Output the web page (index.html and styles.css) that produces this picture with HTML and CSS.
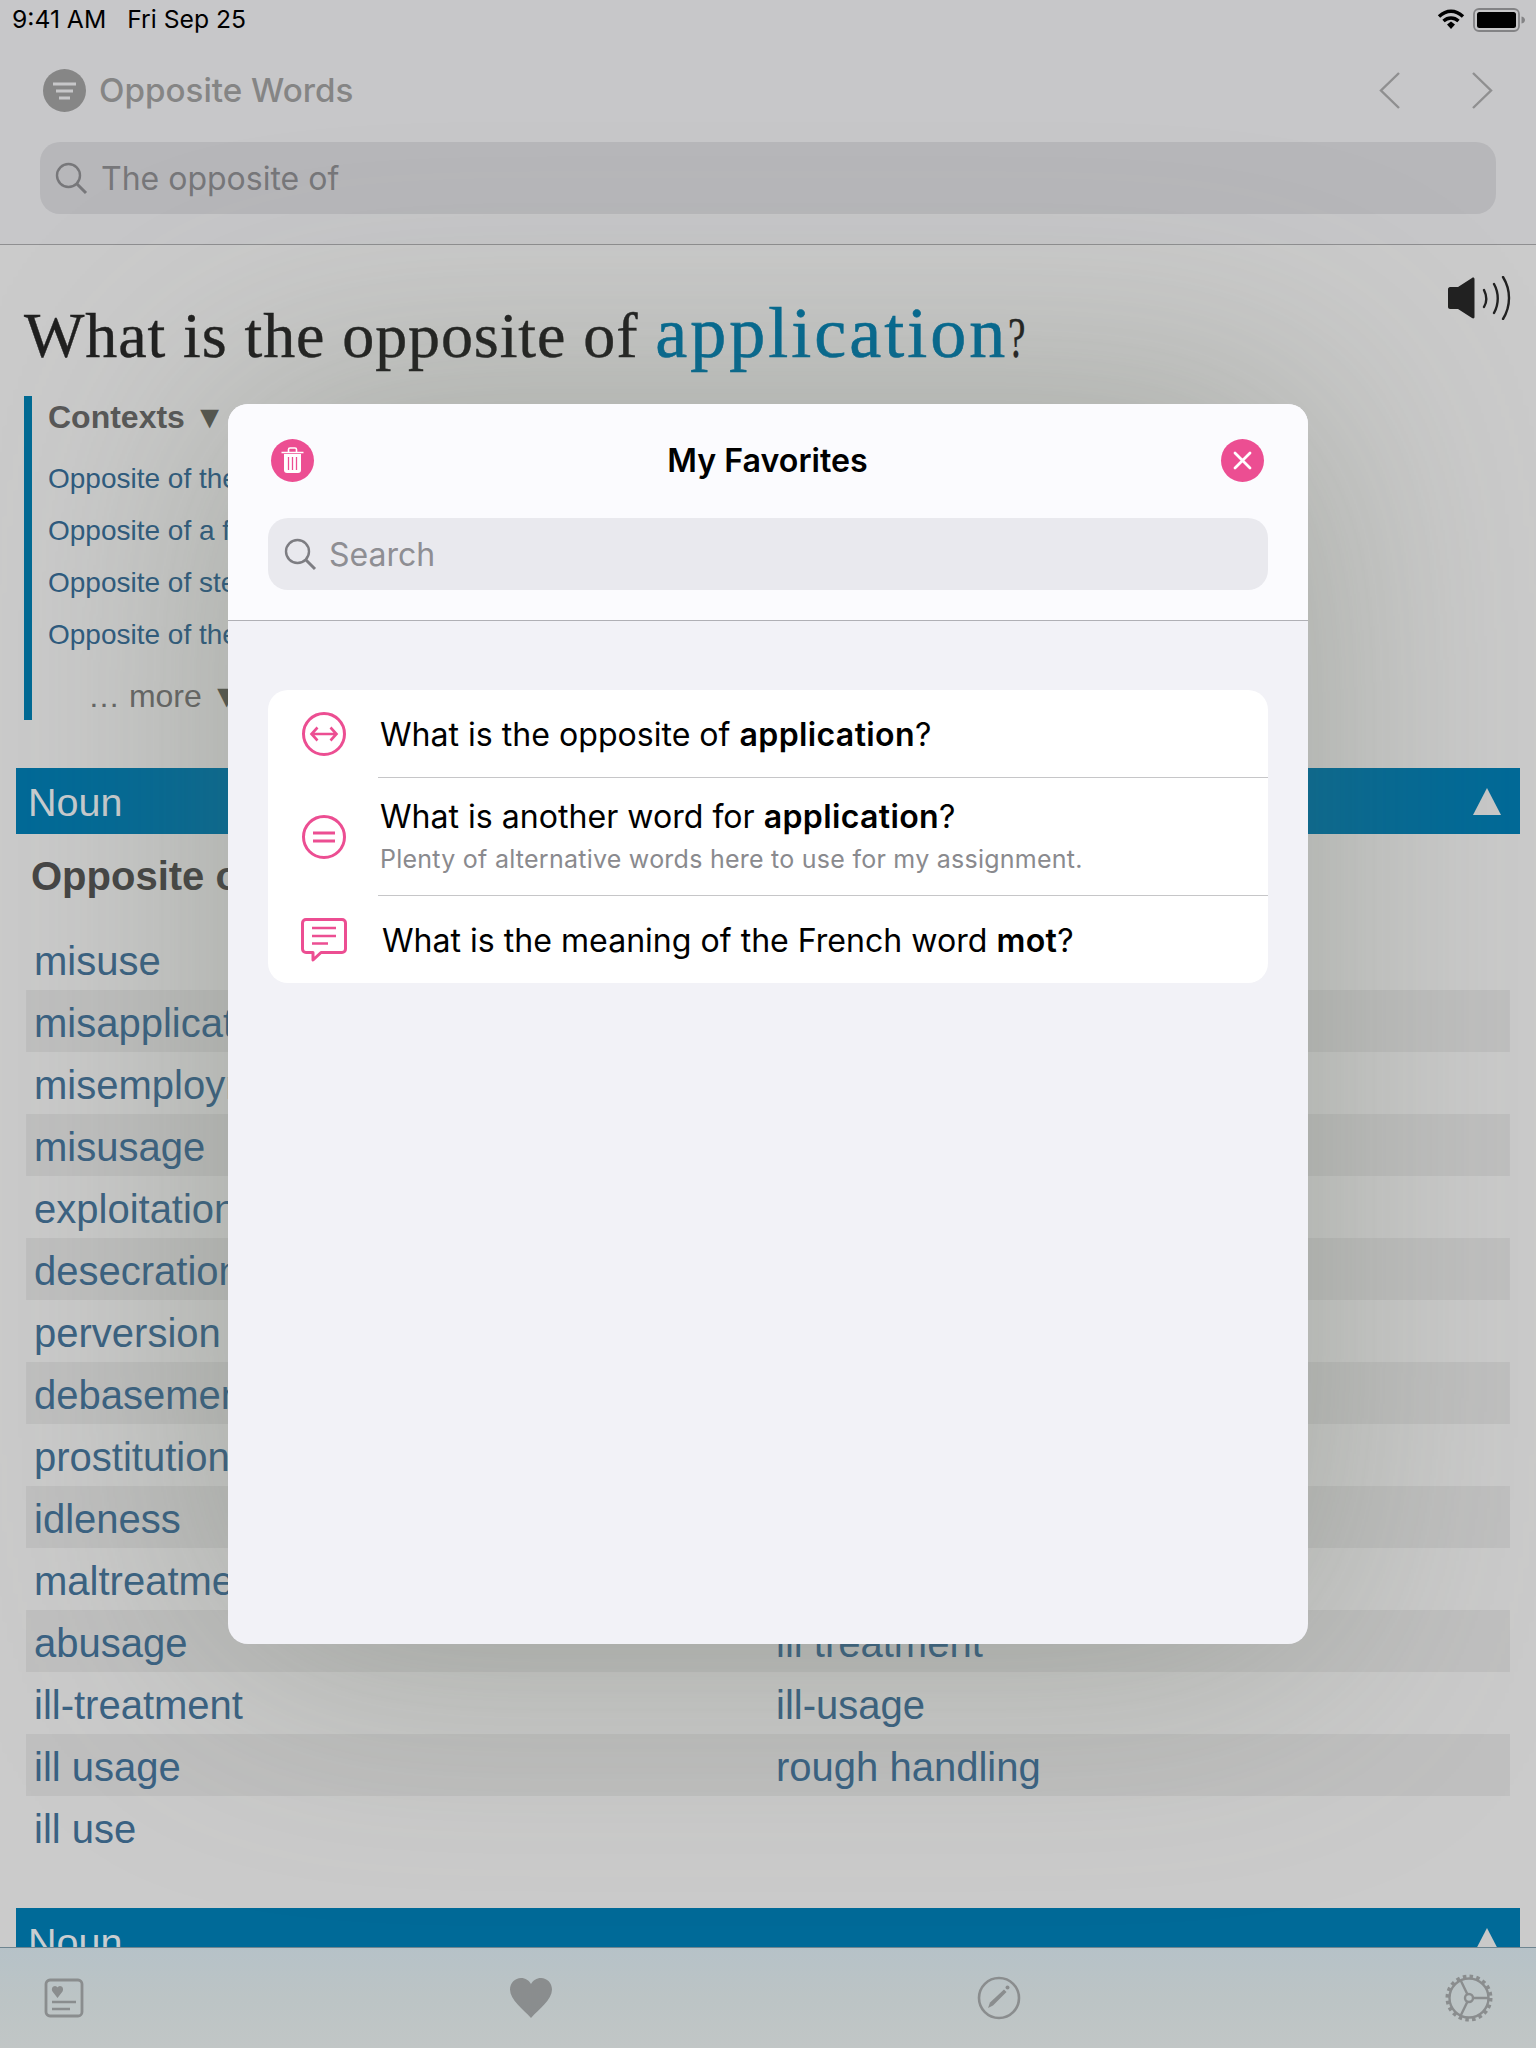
FILE: index.html
```html
<!DOCTYPE html>
<html lang="en">
<head>
  <meta charset="UTF-8">
  <title>Opposite Words</title>
  <link rel="stylesheet" href="styles.css">
</head>
<body>
<div class="page">

  <!-- top bar -->
  <div class="top">
    <div class="status">
      <span class="status-time">9:41 AM</span>
      <span class="status-date">Fri Sep 25</span>
      <svg class="wifi" width="28" height="20" viewBox="0 0 28 20">
        <path d="M2 7.500C9.500 0.500 18.500 0.500 26 7.500" fill="none" stroke="#000" stroke-width="3.400"/>
        <path d="M6.500 12C11 8 17 8 21.500 12" fill="none" stroke="#000" stroke-width="3.400"/>
        <path d="M10 15.500L14 12.500L18 15.500L14 20Z" fill="#000"/>
      </svg>
      <svg class="battery" width="54" height="24" viewBox="0 0 54 24">
        <rect x="1" y="1" width="45" height="22" rx="5" fill="none" stroke="#838385" stroke-width="1.800"/>
        <rect x="4" y="4" width="39" height="16" rx="2.500" fill="#000"/>
        <path d="M48.500 8.500C51 9 52 10.500 52 12C52 13.500 51 15 48.500 15.500Z" fill="#838385"/>
      </svg>
    </div>
    <div class="nav">
      <div class="nav-logo">
        <svg width="43" height="43" viewBox="0 0 43 43">
          <circle cx="21.500" cy="21.500" r="21.500" fill="#868686"/>
          <path d="M10 15H33M13 22H30M16 29H27" stroke="#c7c7c9" stroke-width="3"/>
        </svg>
        <span class="nav-title">Opposite Words</span>
      </div>
      <div class="nav-arrows">
        <svg width="21" height="37" viewBox="0 0 21 37"><path d="M20 1L2 18.500L20 36" fill="none" stroke="#8f8f90" stroke-width="2.400"/></svg>
        <svg width="21" height="37" viewBox="0 0 21 37"><path d="M1 1L19 18.500L1 36" fill="none" stroke="#8f8f90" stroke-width="2.400"/></svg>
      </div>
    </div>
    <div class="search search-back">
      <svg width="33" height="33" viewBox="0 0 33 33"><circle cx="13.500" cy="13.500" r="11.500" fill="none" stroke="#77777a" stroke-width="2.400"/><path d="M22 22L31 31" stroke="#77777a" stroke-width="3"/></svg>
      <span>The opposite of</span>
    </div>
  </div>

  <!-- page behind the dialog -->
  <div class="question">
    <h1>What is the opposite of <b>application</b><span class="question-mark">?</span></h1>
    <svg class="speaker" width="65" height="44" viewBox="0 0 65 44">
      <path d="M1 13C1 12 2 11 3 11H11L25 2C26.500 1 27.500 2 27.500 3V41C27.500 42 26.500 43 25 42L11 33H3C2 33 1 32 1 31Z" fill="#222"/>
      <path d="M37 14C40 20 40 26 37 31M47 8C52 17 52 28 47 37M56 1C64 14 64 30 56 43" fill="none" stroke="#222" stroke-width="2.400" stroke-linecap="round"/>
    </svg>
  </div>

  <div class="contexts">
    <div class="contexts-title">Contexts <span class="arrow">▼</span></div>
    <a class="context-link">Opposite of the use</a>
    <a class="context-link">Opposite of a formal</a>
    <a class="context-link">Opposite of steady</a>
    <a class="context-link">Opposite of the act</a>
    <div class="contexts-more">… more <span class="arrow">▼</span></div>
  </div>

  <div class="section-bar">
    <span>Noun</span>
    <i class="triangle"></i>
  </div>
  <h2 class="section-title">Opposite of</h2>

  <div class="words">
    <div class="word-row"><a>misuse</a></div>
    <div class="word-row"><a>misapplication</a></div>
    <div class="word-row"><a>misemployment</a></div>
    <div class="word-row"><a>misusage</a></div>
    <div class="word-row"><a>exploitation</a></div>
    <div class="word-row"><a>desecration</a></div>
    <div class="word-row"><a>perversion</a></div>
    <div class="word-row"><a>debasement</a></div>
    <div class="word-row"><a>prostitution</a></div>
    <div class="word-row"><a>idleness</a></div>
    <div class="word-row"><a>maltreatment</a></div>
    <div class="word-row"><a>abusage</a><a>ill treatment</a></div>
    <div class="word-row"><a>ill-treatment</a><a>ill-usage</a></div>
    <div class="word-row"><a>ill usage</a><a>rough handling</a></div>
    <div class="word-row"><a>ill use</a></div>
  </div>

  <div class="section-bar section-bar-next">
    <span>Noun</span>
    <i class="triangle"></i>
  </div>

  <!-- bottom tabs -->
  <div class="tabs">
    <svg width="40" height="40" viewBox="0 0 40 40">
      <rect x="2" y="2" width="36" height="36" rx="4" fill="none" stroke="#8a8d8e" stroke-width="2.800"/>
      <path d="M13.500 20L8.500 13.500C7 11 8.500 8 11 8C12.300 8 13 8.800 13.500 9.500C14 8.800 14.700 8 16 8C18.500 8 20 11 18.500 13.500Z" fill="#8a8d8e"/>
      <path d="M8 24H32M8 31H26" stroke="#8a8d8e" stroke-width="2.400"/>
    </svg>
    <svg class="tab-heart" width="44" height="40" viewBox="0 0 44 40">
      <path d="M22 40C14 31 1 22 1 11.500C1 5 6 0 12 0C16.500 0 20 2.500 22 6C24 2.500 27.500 0 32 0C38 0 43 5 43 11.500C43 22 30 31 22 40Z" fill="#8a8d8e"/>
    </svg>
    <svg width="44" height="44" viewBox="0 0 44 44">
      <circle cx="22" cy="22" r="20" fill="none" stroke="#8a8d8e" stroke-width="2.600"/>
      <path d="M11 32L13 26.500L27 13.500L29.500 16L16 29.500Z" fill="#8a8d8e"/>
      <circle cx="30.500" cy="11.500" r="2" fill="#8a8d8e"/>
    </svg>
    <svg width="48" height="48" viewBox="0 0 48 48">
      <circle cx="24" cy="24" r="19.500" fill="none" stroke="#8a8d8e" stroke-width="2.400"/>
      <circle cx="24" cy="24" r="21.500" fill="none" stroke="#8a8d8e" stroke-width="4" stroke-dasharray="3.500 3.250"/>
      <circle cx="24" cy="24" r="4" fill="none" stroke="#8a8d8e" stroke-width="2.400"/>
      <path d="M28 24H43M22.500 20.500L15.500 6M22.500 27.500L15.500 42" stroke="#8a8d8e" stroke-width="2.400"/>
    </svg>
  </div>

  <!-- soft shade the dialog casts -->
  <div class="modal-shade"></div>

  <!-- favorites dialog -->
  <div class="modal">
    <div class="modal-top">
      <div class="modal-header">
        <span class="round-btn">
          <svg width="43" height="43" viewBox="0 0 43 43">
            <path d="M10.500 13.500H32.500M17.500 13V10.500C17.500 9.500 18 9 19 9H24C25 9 25.500 9.500 25.500 10.500V13" fill="none" stroke="#fff" stroke-width="1.600"/>
            <path d="M13 15H30V31C30 33 29 34 27 34H16C14 34 13 33 13 31Z" fill="#fff"/>
            <path d="M17.500 18V31M21.500 18V31M25.500 18V31" stroke="#ec4e92" stroke-width="1.300"/>
          </svg>
        </span>
        <span class="modal-title">My Favorites</span>
        <span class="round-btn">
          <svg width="43" height="43" viewBox="0 0 43 43"><path d="M14 14L29 29M29 14L14 29" stroke="#fff" stroke-width="2.800" stroke-linecap="round"/></svg>
        </span>
      </div>
      <div class="search search-modal">
        <svg width="33" height="33" viewBox="0 0 33 33"><circle cx="13.500" cy="13.500" r="11.500" fill="none" stroke="#7d7d82" stroke-width="2.400"/><path d="M22 22L31 31" stroke="#7d7d82" stroke-width="3"/></svg>
        <span>Search</span>
      </div>
    </div>
    <div class="modal-body">
      <div class="fav-card">
        <div class="fav-row fav-row-one">
          <svg class="fav-icon" width="46" height="44" viewBox="0 0 46 44">
            <circle cx="23" cy="22" r="20.500" fill="none" stroke="#ec4e92" stroke-width="3"/>
            <path d="M11 22H35M16.500 15.500L10.500 22L16.500 28.500M29.500 15.500L35.500 22L29.500 28.500" fill="none" stroke="#ec4e92" stroke-width="2.600"/>
          </svg>
          <div class="fav-text">What is the opposite of <b>application</b>?</div>
        </div>
        <div class="fav-row fav-row-two">
          <svg class="fav-icon" width="46" height="44" viewBox="0 0 46 44">
            <circle cx="23" cy="22" r="20.500" fill="none" stroke="#ec4e92" stroke-width="3"/>
            <path d="M12 18H34M12 26H34" stroke="#ec4e92" stroke-width="3"/>
          </svg>
          <div class="fav-text">
            <div>What is another word for <b>application</b>?</div>
            <div class="fav-note">Plenty of alternative words here to use for my assignment.</div>
          </div>
        </div>
        <div class="fav-row fav-row-three">
          <svg class="fav-icon" width="46" height="44" viewBox="0 0 46 44">
            <path d="M5 1.500H41C43 1.500 44.500 3 44.500 5V31C44.500 33 43 34.500 41 34.500H20L12 42V34.500H5C3 34.500 1.500 33 1.500 31V5C1.500 3 3 1.500 5 1.500Z" fill="none" stroke="#ec4e92" stroke-width="3" stroke-linejoin="round"/>
            <path d="M11 10H35M11 18H35M11 25.500H27" stroke="#ec4e92" stroke-width="2.400"/>
          </svg>
          <div class="fav-text">What is the meaning of the French word <b>mot</b>?</div>
        </div>
      </div>
    </div>
  </div>

</div>
</body>
</html>
```

FILE: styles.css
```css
* { margin: 0; padding: 0; box-sizing: border-box; }
body { font-family: 'Liberation Sans', sans-serif; background: #cbcbcb; }
svg { display: block; flex-shrink: 0; }

.page { position: relative; width: 1536px; height: 2048px; overflow: hidden; background: #cbcbcb; }

/* top bar */
.top { height: 245px; background: #c7c7c9; border-bottom: 1px solid #8f8f91; }
.status { display: flex; align-items: center; height: 40px; padding: 0 9px 2px 12px; font-family: 'Inter', sans-serif; font-size: 24.7px; color: #000; }
.status-date { margin-left: 21px; flex: 1; }
.wifi { margin-right: 8px; }
.battery { margin-top: 1px; }
.nav { display: flex; justify-content: space-between; align-items: center; height: 43px; margin-top: 29px; padding: 0 43px; }
.nav-logo { display: flex; align-items: center; gap: 13px; }
.nav-title { margin-top: -2px; font-family: 'Inter', sans-serif; font-size: 33.2px; font-weight: 500; color: #858585; }
.nav-arrows { display: flex; gap: 72px; }

.search { display: flex; align-items: center; height: 72px; border-radius: 20px; font-family: 'Inter', sans-serif; font-size: 32px; }
.search-back { margin: 30px 40px 0; padding: 0 15px; gap: 13px; background: #b7b7ba; color: #77777a; }
.search-modal { margin: 36px 40px 0; padding: 0 16px; gap: 12px; background: #e9e9ee; color: #8e8e93; }

/* question */
.question { display: flex; justify-content: space-between; align-items: flex-start; height: 151px; padding: 31px 24px 0; }
.question h1 { margin-top: 21px; font-family: 'Liberation Serif', serif; font-size: 64px; font-weight: 400; letter-spacing: 0.9px; line-height: 70px; color: #202020; white-space: nowrap; -webkit-text-stroke: 0.4px #202020; }
.question h1 b { font-size: 72px; font-weight: 400; letter-spacing: 3px; line-height: 1; color: #006a94; -webkit-text-stroke: 0.6px #006a94; }
.question-mark { display: inline-block; font-size: 58px; line-height: 1; transform: scaleX(0.68); transform-origin: left; }

/* contexts */
.contexts { width: 204px; height: 324px; margin-left: 24px; padding-left: 16px; border-left: 8px solid #006a94; white-space: nowrap; }
.contexts-title { height: 42px; margin-bottom: 15px; font-size: 32px; font-weight: 700; line-height: 42px; color: #585858; }
.context-link { display: block; height: 52px; font-size: 28px; line-height: 52px; color: #2e5b7f; }
.contexts-more { margin-top: 13px; padding-left: 40px; font-size: 32px; line-height: 44px; color: #666; }
.arrow { color: #55564f; }

/* sections */
.section-bar { display: flex; justify-content: space-between; align-items: center; height: 66px; margin: 48px 16px 0; padding: 3px 19px 0 12px; background: #006a98; font-size: 39.5px; color: #c9cdd0; }
.section-bar-next { margin-top: 50px; }
.triangle { width: 0; height: 0; margin-top: -3px; border-left: 14px solid transparent; border-right: 14px solid transparent; border-bottom: 27px solid #c9c9c9; }
.section-title { height: 94px; padding-left: 31px; font-size: 40px; line-height: 84px; font-weight: 700; color: #454545; white-space: nowrap; }

.words { margin-left: 26px; width: 1484px; }
.word-row { display: grid; grid-template-columns: 742px 1fr; height: 62px; padding-left: 8px; font-size: 40px; line-height: 66px; color: #3a6283; }
.word-row:nth-child(even) { background: rgba(0, 0, 0, 0.05); }

/* tabs */
.tabs { position: absolute; left: 0; right: 0; bottom: 0; height: 101px; display: flex; justify-content: space-between; align-items: center; padding: 0 43px 0 44px; background: linear-gradient(#b6c2c8, #bcc4c5 50%, #c1c6c6); border-top: 1px solid #6f8590; }
.tab-heart { margin-left: 1px; }

/* dialog */
.modal-shade { position: absolute; left: 228px; top: 404px; width: 1080px; height: 1240px; border-radius: 20px; box-shadow: 0 0 260px rgba(90, 100, 80, 0.36); }
.modal { position: absolute; left: 228px; top: 404px; width: 1080px; height: 1240px; border-radius: 20px; overflow: hidden; background: #f2f2f7; }
.modal-top { height: 217px; background: #fbfbfe; border-bottom: 1px solid #b0b0b5; }
.modal-header { display: flex; justify-content: space-between; align-items: center; height: 43px; padding: 35px 44px 0 43px; box-sizing: content-box; }
.modal-title { font-family: 'Inter', sans-serif; font-size: 32.2px; font-weight: 600; color: #000; }
.round-btn { display: block; width: 43px; height: 43px; border-radius: 50%; background: #ec4e92; }
.modal-body { padding: 69px 40px 0; }
.fav-card { background: #fff; border-radius: 20px; overflow: hidden; font-family: 'Inter', sans-serif; font-size: 32.1px; color: #000; }
.fav-row { position: relative; display: flex; align-items: center; }
.fav-icon { margin-left: 33px; }
.fav-text { flex: 1; }
.fav-text b { font-weight: 600; letter-spacing: 0.35px; }
.fav-row-one { height: 88px; }
.fav-row-two { height: 118px; }
.fav-row-three { height: 87px; padding-top: 2px; }
.fav-row-three .fav-icon { margin-top: -2px; }
.fav-row-one .fav-text, .fav-row-two .fav-text { margin-left: 33px; }
.fav-row-three .fav-text { margin-left: 35px; }
.fav-row-one::after, .fav-row-two::after { content: ""; position: absolute; left: 110px; right: 0; bottom: 0; height: 1px; background: #c6c6c8; }
.fav-note { margin: 8px 0 3px; font-size: 25px; letter-spacing: 0.25px; color: #8a8a8e; }
```
